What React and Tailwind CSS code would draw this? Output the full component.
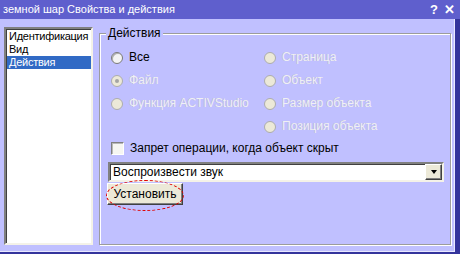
import React from 'react';

const Radio = ({ label, checked, disabled }) => (
  <div className="flex items-center gap-[6px] h-[23px]">
    <span
      className={`w-[12px] h-[12px] rounded-full border flex items-center justify-center shrink-0 ${
        disabled
          ? 'bg-[#ece9d8] border-[#acacac]'
          : 'bg-[#f4f4f4] border-[#7a7a7a] shadow-[inset_1px_1px_0_#b0b0b0]'
      }`}
    >
      {checked && <span className="w-[4px] h-[4px] rounded-full bg-[#a4a4a4]" />}
    </span>
    <span className={disabled ? 'text-[#f0f0f4] [text-shadow:-0.5px_-0.5px_0_#b0b0d0]' : 'text-black'}>{label}</span>
  </div>
);

const App = () => {
  return (
    <div className="w-[460px] h-[254px] bg-[#34349c] flex flex-col font-['Liberation_Sans',Arial,sans-serif] text-[12px] leading-[13px] overflow-hidden">
      {/* Title bar */}
      <div className="h-[19px] shrink-0 bg-[#5f5fcd] flex items-center justify-between pl-[3px] pr-[5px] text-white">
        <span className="text-[11px]">земной шар Свойства и действия</span>
        <div className="flex items-center gap-[6px] font-bold text-[13px]">
          <span>?</span>
          <span>✕</span>
        </div>
      </div>

      {/* Body */}
      <div className="flex-1 flex bg-[#c0c0ff] mr-[5px] mb-[2px] border-r border-b border-[#e8e8ff] pl-[4px] pt-[8px]">
        {/* Left list */}
        <div className="w-[89px] h-[218px] shrink-0 bg-white border-2 border-t-[#808080] border-l-[#808080] border-b-[#f4f2e8] border-r-[#f4f2e8] shadow-[inset_1px_1px_0_#404040] overflow-hidden">
          <div className="pt-[1px] pl-[1px] text-[11px] tracking-[-0.25px]">
            <div className="h-[13px] pl-[2px] text-black whitespace-nowrap">Идентификация</div>
            <div className="h-[13px] pl-[2px] text-black">Вид</div>
            <div className="h-[13px] pl-[2px] bg-[#316ac5] text-white">Действия</div>
          </div>
        </div>

        {/* Group box */}
        <div className="relative ml-[6px] mt-[6px] w-[352px] h-[212px] border border-[#9c9c9c] shadow-[inset_1px_1px_0_#ffffff,1px_1px_0_#ffffff] pl-[8px] pt-[12px]">
          <span className="absolute left-[6px] -top-[7px] px-[2px] bg-[#c0c0ff] text-black">Действия</span>

          <div className="grid grid-cols-[153px_1fr] ml-[3px]">
            <Radio label="Все" />
            <Radio label="Страница" disabled />
            <Radio label="Файл" checked disabled />
            <Radio label="Объект" disabled />
            <Radio label="Функция ACTIVStudio" disabled />
            <Radio label="Размер объекта" disabled />
            <div />
            <Radio label="Позиция объекта" disabled />
          </div>

          <div className="flex items-center gap-[6px] h-[14px] mt-[3px] ml-[3px]">
            <span className="w-[13px] h-[13px] shrink-0 bg-[#f6f6f2] border border-t-[#808080] border-l-[#808080] border-b-[#ffffff] border-r-[#ffffff] shadow-[inset_1px_1px_0_#b8b8b8]" />
            <span className="text-black">Запрет операции, когда объект скрыт</span>
          </div>

          {/* Combobox */}
          <div className="mt-[7px] w-[336px] h-[20px] flex items-center bg-white border-2 border-t-[#808080] border-l-[#808080] border-b-[#f4f2e8] border-r-[#f4f2e8] shadow-[inset_1px_1px_0_#404040]">
            <span className="flex-1 pl-[3px] text-black">Воспроизвести звук</span>
            <div className="w-[17px] h-[16px] bg-[#ece9d8] border border-t-white border-l-white border-b-[#404040] border-r-[#404040] shadow-[inset_-1px_-1px_0_#808080] flex items-center justify-center">
              <span className="w-0 h-0 border-l-[3.5px] border-r-[3.5px] border-t-[4px] border-l-transparent border-r-transparent border-t-black" />
            </div>
          </div>

          {/* Button with annotation */}
          <div className="relative mt-[1px] -ml-[1px] w-[76px]">
            <button className="w-[76px] h-[22px] bg-[#ece9d8] border border-t-white border-l-white border-b-[#404040] border-r-[#404040] shadow-[inset_-1px_-1px_0_#808080] text-black text-[12px] leading-[14px]">
              Установить
            </button>
            <span className="absolute -left-[1px] -top-[3px] w-[78px] h-[31px] rounded-[50%] border border-dashed border-[#e00000]" />
          </div>
        </div>
      </div>
    </div>
  );
};

export default App;
